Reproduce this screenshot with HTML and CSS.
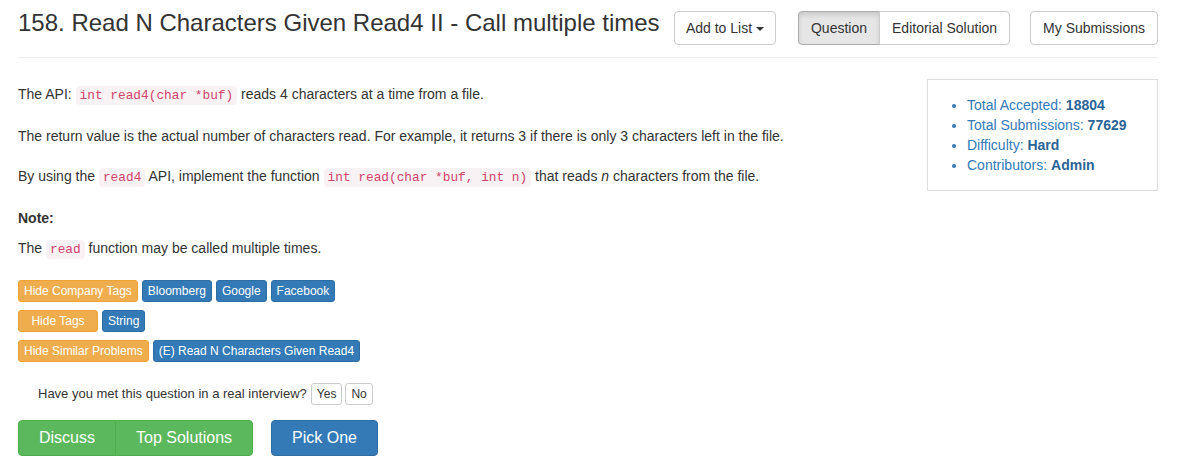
FILE: index.html
```html
<!DOCTYPE html>
<html>
<head>
<meta charset="utf-8">
<link rel="stylesheet" href="styles.css">
</head>
<body>
<div class="container">
  <div class="header">
    <h3 class="title">158. Read N Characters Given Read4 II - Call multiple times</h3>
    <div class="actions">
      <button class="btn add">Add to List <span class="caret"></span></button>
      <div class="btn-group">
        <button class="btn active">Question</button>
        <button class="btn">Editorial Solution</button>
      </div>
      <button class="btn">My Submissions</button>
    </div>
  </div>
  <div class="content">
    <div class="main">
      <p>The API: <code>int read4(char *buf)</code> reads 4 characters at a time from a file.</p>
      <p>The return value is the actual number of characters read. For example, it returns 3 if there is only 3 characters left in the file.</p>
      <p>By using the <code>read4</code> API, implement the function <code>int read(char *buf, int n)</code> that reads <i>n</i> characters from the file.</p>
      <p class="note"><b>Note:</b></p>
      <p>The <code>read</code> function may be called multiple times.</p>
      <div class="tags">
        <div class="tag-row">
          <span class="tag warn">Hide Company Tags</span>
          <span class="tag prim">Bloomberg</span>
          <span class="tag prim">Google</span>
          <span class="tag prim">Facebook</span>
        </div>
        <div class="tag-row">
          <span class="tag warn w80">Hide Tags</span>
          <span class="tag prim">String</span>
        </div>
        <div class="tag-row">
          <span class="tag warn">Hide Similar Problems</span>
          <span class="tag prim">(E) Read N Characters Given Read4</span>
        </div>
      </div>
      <div class="interview">
        <span>Have you met this question in a real interview?</span>
        <button class="btn-xs">Yes</button>
        <button class="btn-xs">No</button>
      </div>
      <div class="bottom">
        <div class="btn-group">
          <button class="big green">Discuss</button>
          <button class="big green">Top Solutions</button>
        </div>
        <button class="big blue solo">Pick One</button>
      </div>
    </div>
    <div class="side">
      <ul>
        <li>Total Accepted: <b>18804</b></li>
        <li>Total Submissions: <b>77629</b></li>
        <li>Difficulty: <b>Hard</b></li>
        <li>Contributors: <b>Admin</b></li>
      </ul>
    </div>
  </div>
</div>
</body>
</html>
```

FILE: styles.css
```css
* { box-sizing: border-box; }
html, body { margin: 0; padding: 0; background: #fff; }
body {
  font-family: "Liberation Sans", Arial, Helvetica, sans-serif;
  font-size: 14px;
  line-height: 20px;
  color: #333;
}
.container {
  width: 1140px;
  margin-left: 18px;
}
.header {
  display: flex;
  align-items: flex-start;
  padding: 8px 0 12px;
  border-bottom: 1px solid #eee;
}
.title {
  margin: 2px 0 0;
  font-size: 24px;
  font-weight: 400;
  line-height: 1.1;
  color: #333;
  white-space: nowrap;
}
.actions {
  margin-left: auto;
  margin-top: 3px;
  display: flex;
  gap: 20px;
}
.btn {
  font-family: inherit;
  font-size: 14px;
  line-height: 20px;
  padding: 6px 12px;
  height: 34px;
  color: #333;
  background: #fff;
  border: 1px solid #ccc;
  border-radius: 4px;
  white-space: nowrap;
}
.btn.add {
  padding: 6px 11px;
  margin-right: 2px;
}
.caret {
  display: inline-block;
  width: 0; height: 0;
  margin-left: 0;
  vertical-align: middle;
  border-top: 4px solid #333;
  border-left: 4px solid transparent;
  border-right: 4px solid transparent;
}
.btn-group { display: flex; }
.btn-group .btn:first-child { border-top-right-radius: 0; border-bottom-right-radius: 0; }
.btn-group .btn:last-child { border-top-left-radius: 0; border-bottom-left-radius: 0; margin-left: -1px; }
.btn.active {
  background: #e6e6e6;
  border-color: #adadad;
  box-shadow: inset 0 3px 5px rgba(0,0,0,.125);
}
.content {
  display: flex;
  align-items: flex-start;
  padding-top: 21px;
}
.main {
  flex: 1;
  padding-top: 5px;
}
.main p { margin: 0 0 20px; }
.main p.note { margin-bottom: 10px; }
code {
  font-family: "Liberation Mono", "DejaVu Sans Mono", monospace;
  font-size: 12.8px;
  padding: 2px 4px;
  color: #d0436c;
  background: #f9f2f4;
  border-radius: 4px;
}
.tags {
  margin-top: 4px;
  display: flex;
  flex-direction: column;
  gap: 8px;
}
.tag-row { display: flex; gap: 4px; }
.tag {
  display: inline-block;
  font-size: 12px;
  line-height: 18px;
  padding: 1px 5px;
  border: 1px solid;
  border-radius: 3px;
  color: #fff;
  white-space: nowrap;
}
.tag.warn { background: #f0ad4e; border-color: #eea236; }
.tag.prim { background: #337ab7; border-color: #2e6da4; }
.tag.w80 { width: 80px; text-align: center; }
.interview {
  display: flex;
  align-items: center;
  gap: 3px;
  padding-left: 20px;
  margin-top: 21px;
  font-size: 13px;
}
.interview span { margin-right: 1px; }
.btn-xs {
  font-family: inherit;
  font-size: 12px;
  line-height: 18px;
  padding: 1px 5px;
  color: #333;
  background: #fff;
  border: 1px solid #ccc;
  border-radius: 3px;
}
.bottom {
  display: flex;
  gap: 18px;
  margin-top: 15px;
}
.big {
  font-family: inherit;
  font-size: 16px;
  line-height: 20px;
  padding: 7px 20px;
  height: 36px;
  color: #fff;
  border: 1px solid;
  border-radius: 4px;
}
.green { background: #5cb85c; border-color: #4cae4c; }
.blue { background: #337ab7; border-color: #2e6da4; }
.btn-group .big:first-child { border-top-right-radius: 0; border-bottom-right-radius: 0; }
.btn-group .big:last-child { border-top-left-radius: 0; border-bottom-left-radius: 0; margin-left: -1px; }
.side {
  width: 231px;
  border: 1px solid #ddd;
  padding: 15px 15px 15px 0;
}
.side ul {
  margin: 0;
  padding-left: 39px;
  color: #337ab7;
}
.side b { color: #2a6496; }
```
